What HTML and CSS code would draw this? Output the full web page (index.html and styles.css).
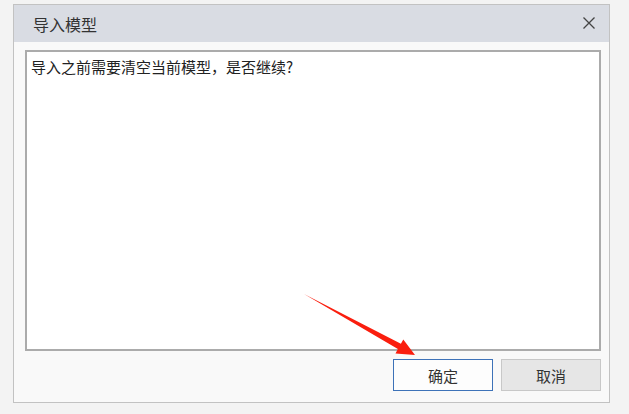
FILE: index.html
```html
<!DOCTYPE html>
<html lang="zh-CN">
<head>
<meta charset="utf-8">
<title>导入模型</title>
<link rel="stylesheet" href="styles.css">
</head>
<body>
<div class="window">
  <div class="titlebar">
    <span class="title">导入模型</span>
    <svg class="close" width="12" height="12" viewBox="0 0 12 12"><path d="M0.5 0.5 L11.5 11.5 M11.5 0.5 L0.5 11.5" stroke="#444" stroke-width="1.3" fill="none"/></svg>
  </div>
  <div class="content">
    <div class="message">导入之前需要清空当前模型，是否继续?</div>
  </div>
  <div class="buttons">
    <button class="btn primary">确定</button>
    <button class="btn">取消</button>
  </div>
</div>
<svg class="arrow" width="629" height="414" viewBox="0 0 629 414">
  <polygon points="304,294 400.9,343.8 403.3,339.4 415,355 395.5,353.4 397.9,349" fill="#fa1e0e"/>
</svg>
</body>
</html>
```

FILE: styles.css
```css
html, body {
  margin: 0;
  padding: 0;
}
body {
  background: #f3f3f3;
  width: 629px;
  height: 414px;
  overflow: hidden;
  position: relative;
  font-family: "Noto Sans CJK SC", "Noto Sans", sans-serif;
  color: #333;
}
.window {
  margin: 4px 0 0 13px;
  width: 597px;
  height: 399px;
  box-sizing: border-box;
  border: 1px solid #c2c2c2;
  background: #f9f9f9;
  display: flex;
  flex-direction: column;
}
.titlebar {
  height: 37px;
  flex: none;
  background: #d9dce3;
  display: flex;
  align-items: center;
  justify-content: space-between;
  padding: 0 14px 0 19px;
}
.title {
  font-size: 16px;
  line-height: 20px;
  color: #333;
}
.close {
  display: block;
  margin-top: -1px;
}
.content {
  padding: 8px 8px 0 11px;
}
.message {
  height: 301px;
  box-sizing: border-box;
  background: #fff;
  border: 2px solid #ababab;
  padding: 4px 4px;
  font-size: 15px;
  line-height: 22px;
  color: #222;
}
.buttons {
  display: flex;
  justify-content: flex-end;
  gap: 8px;
  margin-top: 8px;
  padding-right: 8px;
}
.btn {
  width: 100px;
  height: 32px;
  box-sizing: border-box;
  border: 1px solid #c8c8c8;
  background: #e6e6e6;
  font-family: "Noto Sans CJK SC", "Noto Sans", sans-serif;
  font-size: 15px;
  color: #333;
  padding: 0;
}
.btn.primary {
  background: #fdfdfd;
  border: 1px solid #3d72b8;
}
.arrow {
  position: absolute;
  left: 0;
  top: 0;
  pointer-events: none;
}
```
